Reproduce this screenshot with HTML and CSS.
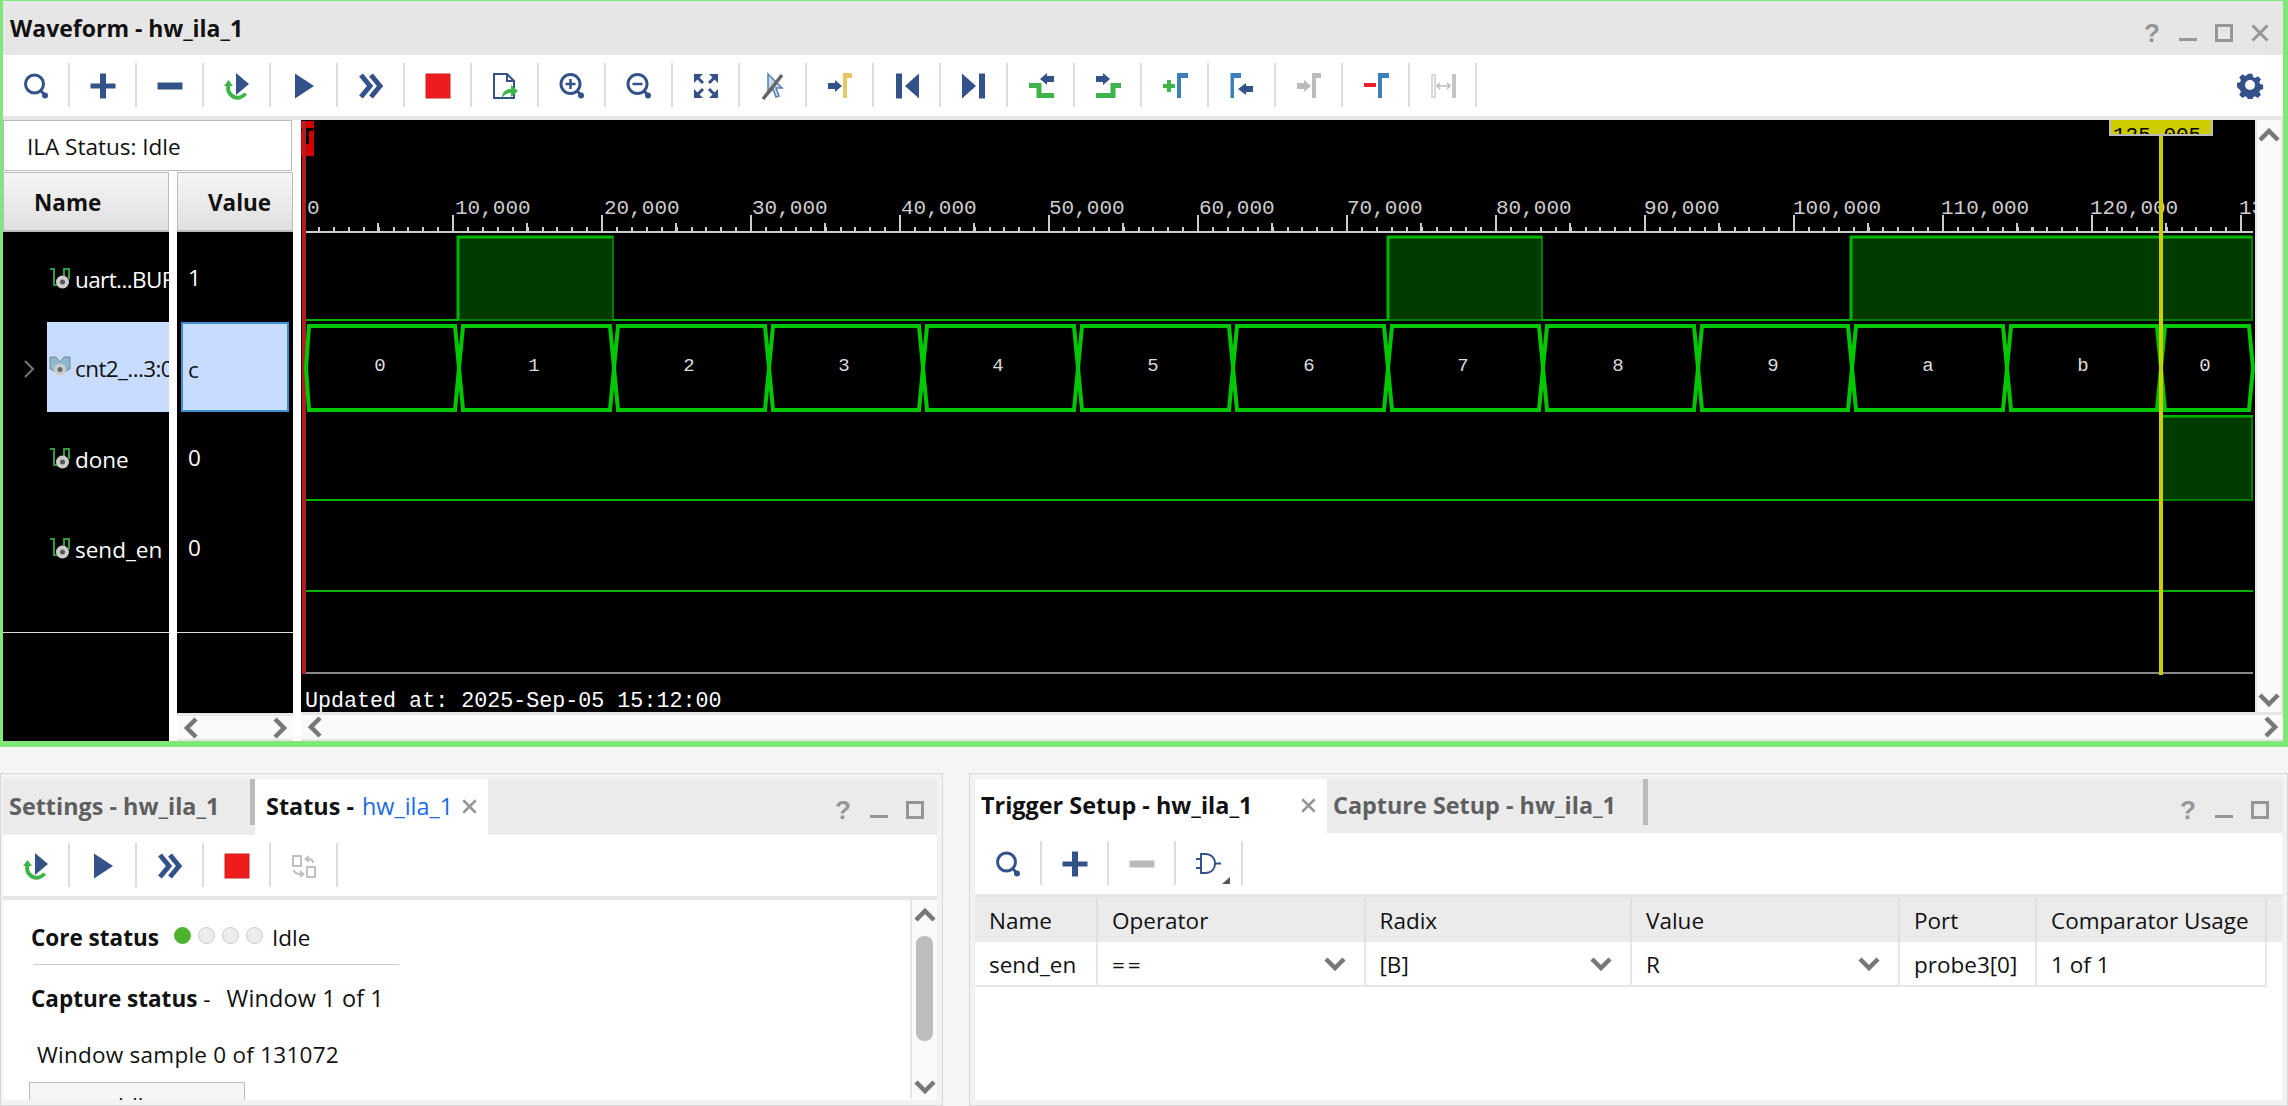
FILE: index.html
```html
<!DOCTYPE html>
<html lang="en">
<head>
  <meta charset="UTF-8">
  <title>Waveform - hw_ila_1</title>
  <link rel="stylesheet" href="styles.css">
</head>
<body>
  <!-- shared icons -->
  <svg class="defs" aria-hidden="true">
    <symbol id="i-search" viewBox="0 0 28 28"><circle cx="12.5" cy="12" r="9" fill="none" stroke="#34528a" stroke-width="3"/><path d="M19 19l4 4" stroke="#34528a" stroke-width="3"/><circle cx="23" cy="23.5" r="3" fill="#34528a"/></symbol>
    <symbol id="i-plus" viewBox="0 0 28 28"><path d="M1.5 11.5h25v5h-25zM11 1.5h6v25h-6z" fill="#34528a"/></symbol>
    <symbol id="i-minus" viewBox="0 0 28 28"><path d="M1.5 10.5h25v7h-25z" fill="currentColor"/></symbol>
    <symbol id="i-refresh" viewBox="0 0 28 28"><path d="M13 1l13 11-13 11z" fill="#34528a"/><path d="M5.5 13.500a9.500 9.500 0 0 0 17 8" fill="none" stroke="#3db54a" stroke-width="4"/><path d="M1 14h9l-4.500-6z" fill="#3db54a"/></symbol>
    <symbol id="i-play" viewBox="0 0 28 28"><path d="M5 1.5L24 14 5 26.5z" fill="#34528a"/></symbol>
    <symbol id="i-ff" viewBox="0 0 28 28"><path d="M4 3l9 11-9 11M14 3l9 11-9 11" fill="none" stroke="#34528a" stroke-width="5"/></symbol>
    <symbol id="i-stop" viewBox="0 0 28 28"><rect x="2" y="2" width="24" height="24" fill="#ee1c1c" stroke="#cc2020"/></symbol>
    <symbol id="i-export" viewBox="0 0 28 28"><path d="M3 2h13l7 7v17H3z" fill="#fff" stroke="#34528a" stroke-width="2"/><path d="M16 2v7h7" fill="none" stroke="#34528a" stroke-width="2"/><path d="M11 26c0-6 4-9 9-9v-4l7 6-7 6v-4c-3 0-6 1-9 5z" fill="#3db54a"/></symbol>
    <symbol id="i-zoomin" viewBox="0 0 28 28"><circle cx="12.5" cy="12" r="9.5" fill="none" stroke="#34528a" stroke-width="3"/><path d="M7.5 12h10M12.5 7v10" stroke="#34528a" stroke-width="2.5"/><path d="M19 19l4 4" stroke="#34528a" stroke-width="3"/><circle cx="23" cy="23.5" r="3" fill="#34528a"/></symbol>
    <symbol id="i-zoomout" viewBox="0 0 28 28"><circle cx="12.5" cy="12" r="9.5" fill="none" stroke="#34528a" stroke-width="3"/><path d="M7.5 12h10" stroke="#34528a" stroke-width="2.5"/><path d="M19 19l4 4" stroke="#34528a" stroke-width="3"/><circle cx="23" cy="23.5" r="3" fill="#34528a"/></symbol>
    <symbol id="i-fit" viewBox="0 0 28 28"><g fill="#34528a"><path d="M2 2h9l-9 9z"/><path d="M26 2h-9l9 9z"/><path d="M2 26h9l-9-9z"/><path d="M26 26h-9l9-9z"/></g><path d="M5 5l6 6M23 5l-6 6M5 23l6-6M23 23l-6-6" stroke="#34528a" stroke-width="3"/></symbol>
    <symbol id="i-cursor" viewBox="0 0 28 28"><path d="M9 2v20l5-5 3 8 3-1-3-8h6z" fill="#c8daf0" stroke="#5a7fb0" stroke-width="1.5"/><path d="M4 27L23 3" stroke="#666" stroke-width="3.5"/></symbol>
    <symbol id="i-mark" viewBox="0 0 28 28"><path d="M2 11h7V8l7 6-7 6v-3H2z" fill="#34528a"/><path d="M17 1h9v5h-5v20h-4z" fill="#e3c863"/></symbol>
    <symbol id="i-first" viewBox="0 0 28 28"><path d="M3 1.500h6v25H3zM26 1.500v25L12 14z" fill="#34528a"/></symbol>
    <symbol id="i-last" viewBox="0 0 28 28"><path d="M19 1.500h6v25h-6zM2 1.500v25L16 14z" fill="#34528a"/></symbol>
    <symbol id="i-prev" viewBox="0 0 28 28"><path d="M27 4h-7V1l-7 6 7 6v-3h7z" fill="#34528a"/><path d="M2 13.500h10v10h15" fill="none" stroke="#3db54a" stroke-width="5"/></symbol>
    <symbol id="i-next" viewBox="0 0 28 28"><path d="M2 4h7V1l7 6-7 6v-3H2z" fill="#34528a"/><path d="M2 23.500h17v-10h8" fill="none" stroke="#3db54a" stroke-width="5"/></symbol>
    <symbol id="i-add" viewBox="0 0 28 28"><path d="M2 12h12v4H2zM6 8h4v12H6z" fill="#3db54a"/><path d="M16 1h11v5h-7v20h-4z" fill="#3b80b8"/></symbol>
    <symbol id="i-goto" viewBox="0 0 28 28"><path d="M2.500 1h10.500v5H6v20H2.500z" fill="#3b80b8"/><path d="M25 14h-7v-3l-8 6 8 6v-3h7z" fill="#34528a"/></symbol>
    <symbol id="i-mark-off" viewBox="0 0 28 28"><path d="M2 11h7V8l7 6-7 6v-3H2z" fill="#bbb"/><path d="M17 1h9v5h-5v20h-4z" fill="#bbb"/></symbol>
    <symbol id="i-remove" viewBox="0 0 28 28"><path d="M2 11h12v4H2z" fill="#ee1c2c"/><path d="M16 1h11v5h-7v20h-4z" fill="#3b80b8"/></symbol>
    <symbol id="i-measure" viewBox="0 0 28 28"><rect x="3" y="3" width="3" height="22" fill="#fff" stroke="#ccc" stroke-width="1.500"/><path d="M23 2h4v24h-4z" fill="#c4c4c4"/><path d="M8 14h13M11 11l-3 3 3 3M18 11l3 3-3 3" fill="none" stroke="#bbb" stroke-width="1.500"/></symbol>
    <symbol id="i-swap" viewBox="0 0 28 28"><g fill="none" stroke="#c0c0c0" stroke-width="2"><rect x="3" y="4" width="8" height="10"/><rect x="17" y="15" width="8" height="10"/><path d="M23 11c0-3-2-4-5-4M4 18c0 3 2 4 7 4"/></g><path d="M19 3l-5 4 5 4zM10 18l5 4-5 4z" fill="#c0c0c0"/></symbol>
    <symbol id="i-gear" viewBox="0 0 28 28"><path d="M11.500 1.500h5l.8 3.500 2.300 1 3-1.900 3.500 3.500-1.900 3 1 2.300 3.300.8v5l-3.300.8-1 2.300 1.900 3-3.500 3.500-3-1.900-2.300 1-.8 3.300h-5l-.8-3.300-2.300-1-3 1.900-3.500-3.500 1.900-3-1-2.300L-.5 16.500v-5l3.300-.8 1-2.300-1.900-3L5.400 1.900l3 1.900 2.300-1z" fill="#34528a" transform="translate(1.500 1.500) scale(.9)"/><circle cx="14" cy="14" r="5" fill="#fff"/></symbol>
    <symbol id="i-sig" viewBox="0 0 22 22"><path d="M1 2h4v16h6M15 10V2h5v10" fill="none" stroke="#2f9a3f" stroke-width="2"/><circle cx="13.500" cy="15" r="6.500" fill="#ccc"/><circle cx="13.500" cy="15" r="2.500" fill="#555"/></symbol>
    <symbol id="i-bus" viewBox="0 0 22 22"><path d="M1 1h6l4 5 4-5h6v12l-6 3H7l-6-3z" fill="#8fb8d0" stroke="#7a8a96"/><circle cx="11" cy="13.500" r="6" fill="#ccc"/><circle cx="11" cy="13.500" r="2.500" fill="#666"/></symbol>
    <symbol id="c-up" viewBox="0 0 22 14"><path d="M2 12l9-9 9 9" fill="none" stroke="#777" stroke-width="4.500"/></symbol>
    <symbol id="c-down" viewBox="0 0 22 14"><path d="M2 2l9 9 9-9" fill="none" stroke="#777" stroke-width="4.500"/></symbol>
    <symbol id="c-left" viewBox="0 0 14 22"><path d="M12 2l-9 9 9 9" fill="none" stroke="#777" stroke-width="4.500"/></symbol>
    <symbol id="c-right" viewBox="0 0 14 22"><path d="M2 2l9 9-9 9" fill="none" stroke="#777" stroke-width="4.500"/></symbol>
    <symbol id="w-min" viewBox="0 0 18 18"><path d="M0 14h18v3H0z" fill="#969696"/></symbol>
    <symbol id="w-max" viewBox="0 0 18 18"><path d="M1.500 1.500h15v15h-15z" fill="none" stroke="#969696" stroke-width="3"/></symbol>
    <symbol id="w-close" viewBox="0 0 18 18"><path d="M1.500 1.500l15 15M16.500 1.500l-15 15" stroke="#969696" stroke-width="3"/></symbol>
  </svg>

  <!-- waveform window -->
  <section class="wave-panel">
    <header class="title-bar">
      <h1 class="title">Waveform - hw_ila_1</h1>
      <div class="win-btns">
        <span class="help">?</span>
        <svg class="win-icon"><use href="#w-min"/></svg>
        <svg class="win-icon"><use href="#w-max"/></svg>
        <svg class="win-icon"><use href="#w-close"/></svg>
      </div>
    </header>
    <div class="toolbar">
      <span class="tb"><svg class="ico"><use href="#i-search"/></svg></span>
      <span class="tb"><svg class="ico"><use href="#i-plus"/></svg></span>
      <span class="tb"><svg class="ico"><use href="#i-minus"/></svg></span>
      <span class="tb"><svg class="ico"><use href="#i-refresh"/></svg></span>
      <span class="tb"><svg class="ico"><use href="#i-play"/></svg></span>
      <span class="tb"><svg class="ico"><use href="#i-ff"/></svg></span>
      <span class="tb"><svg class="ico"><use href="#i-stop"/></svg></span>
      <span class="tb"><svg class="ico"><use href="#i-export"/></svg></span>
      <span class="tb"><svg class="ico"><use href="#i-zoomin"/></svg></span>
      <span class="tb"><svg class="ico"><use href="#i-zoomout"/></svg></span>
      <span class="tb"><svg class="ico"><use href="#i-fit"/></svg></span>
      <span class="tb"><svg class="ico"><use href="#i-cursor"/></svg></span>
      <span class="tb"><svg class="ico"><use href="#i-mark"/></svg></span>
      <span class="tb"><svg class="ico"><use href="#i-first"/></svg></span>
      <span class="tb"><svg class="ico"><use href="#i-last"/></svg></span>
      <span class="tb"><svg class="ico"><use href="#i-prev"/></svg></span>
      <span class="tb"><svg class="ico"><use href="#i-next"/></svg></span>
      <span class="tb"><svg class="ico"><use href="#i-add"/></svg></span>
      <span class="tb"><svg class="ico"><use href="#i-goto"/></svg></span>
      <span class="tb"><svg class="ico"><use href="#i-mark-off"/></svg></span>
      <span class="tb"><svg class="ico"><use href="#i-remove"/></svg></span>
      <span class="tb"><svg class="ico"><use href="#i-measure"/></svg></span>
      <svg class="ico gear"><use href="#i-gear"/></svg>
    </div>

    <div class="wave-body">
      <div class="signals">
        <div class="ila-status">ILA Status: Idle</div>
        <div class="cols">
          <div class="col col-name">
            <div class="col-head">Name</div>
            <div class="rows">
              <div class="row"><svg class="sig"><use href="#i-sig"/></svg><span class="sig-text tight">uart...BUF</span></div>
              <div class="row row-sel">
                <svg class="expand" viewBox="0 0 12 18"><path d="M2 1l8 8-8 8" fill="none" stroke="#777" stroke-width="2"/></svg>
                <div class="sel-fill"><svg class="sig"><use href="#i-bus"/></svg><span class="sig-text tight">cnt2_...3:0</span></div>
              </div>
              <div class="row"><svg class="sig"><use href="#i-sig"/></svg><span class="sig-text">done</span></div>
              <div class="row"><svg class="sig"><use href="#i-sig"/></svg><span class="sig-text">send_en</span></div>
            </div>
          </div>
          <div class="col col-value">
            <div class="col-head">Value</div>
            <div class="rows">
              <div class="val">1</div>
              <div class="val val-sel">c</div>
              <div class="val">0</div>
              <div class="val">0</div>
            </div>
            <div class="val-rest"></div>
            <div class="hscroll val-scroll">
              <svg class="ch-h"><use href="#c-left"/></svg>
              <svg class="ch-h"><use href="#c-right"/></svg>
            </div>
          </div>
        </div>
      </div>

      <div class="wave-main">
        <div class="canvas-row">
          <svg class="wave" viewBox="301 120 1954 592" font-family="'Liberation Mono', monospace">
            <!-- time marker -->
            <svg x="301" y="121" width="13" height="35" viewBox="301 121 13 35">
              <rect x="301" y="121" width="13" height="35" fill="#d40000"/>
              <text x="300" y="144" font-size="23" font-weight="bold" fill="#000">T</text>
            </svg>
            <rect x="302" y="156" width="2" height="518" fill="#e01010"/>
            <rect x="302" y="121" width="1" height="35" fill="#e01010"/>
            <rect x="303" y="121" width="3" height="553" fill="#a82222"/>

            <!-- ruler -->
            <g fill="#ccc" font-size="21">
              <text x="307" y="214">0</text>
              <text x="455" y="214">10,000</text>
              <text x="604" y="214">20,000</text>
              <text x="752" y="214">30,000</text>
              <text x="901" y="214">40,000</text>
              <text x="1049" y="214">50,000</text>
              <text x="1199" y="214">60,000</text>
              <text x="1347" y="214">70,000</text>
              <text x="1496" y="214">80,000</text>
              <text x="1644" y="214">90,000</text>
              <text x="1793" y="214">100,000</text>
              <text x="1941" y="214">110,000</text>
              <text x="2090" y="214">120,000</text>
              <text x="2239" y="214">130,000</text>
            </g>
            <g stroke="#ccc" shape-rendering="crispEdges">
              <path d="M306 232H2253" stroke-width="2"/>
              <path d="M318 229H2253" stroke-width="5" stroke-dasharray="2 12.900"/>
              <path d="M377 227H2253" stroke-width="8" stroke-dasharray="2 147"/>
              <path d="M452 223H2253" stroke-width="16" stroke-dasharray="2 147"/>
            </g>

            <!-- uart high pulses -->
            <g fill="#003c00" stroke="#007c00" stroke-width="2">
              <rect x="458" y="237" width="155" height="83"/>
              <rect x="1388" y="237" width="154" height="83"/>
              <rect x="1851" y="237" width="401" height="83"/>
              <rect x="2162" y="417" width="90" height="83"/>
            </g>
            <g fill="none" stroke="#00b400" stroke-width="3">
              <path d="M458 320V237H613"/>
              <path d="M1388 320V237H1542"/>
              <path d="M1851 320V237H2252"/>
            </g>
            <g fill="none" stroke="#00b400" stroke-width="2">
              <path d="M306 320H458M613 320H1388M1542 320H1851"/>
              <path d="M306 500H2161M2161 416H2253"/>
              <path d="M306 591H2253"/>
            </g>

            <!-- cnt2 bus -->
            <g fill="none" stroke="#00c800" stroke-width="4">
              <path d="M306 368L309 326H455L463 410H610L618 326H765L773 410H919L927 326H1074L1082 410H1229L1237 326H1384L1392 410H1539L1547 326H1694L1702 410H1848L1856 326H2003L2011 410H2157L2165 326H2249L2253 368"/>
              <path d="M306 368L309 410H455L463 326H610L618 410H765L773 326H919L927 410H1074L1082 326H1229L1237 410H1384L1392 326H1539L1547 410H1694L1702 326H1848L1856 410H2003L2011 326H2157L2165 410H2249L2253 368"/>
            </g>
            <g fill="#ddd" font-size="19" text-anchor="middle">
              <text x="380" y="371">0</text>
              <text x="534" y="371">1</text>
              <text x="689" y="371">2</text>
              <text x="844" y="371">3</text>
              <text x="998" y="371">4</text>
              <text x="1153" y="371">5</text>
              <text x="1309" y="371">6</text>
              <text x="1463" y="371">7</text>
              <text x="1618" y="371">8</text>
              <text x="1773" y="371">9</text>
              <text x="1928" y="371">a</text>
              <text x="2083" y="371">b</text>
              <text x="2205" y="371">0</text>
            </g>

            <path d="M306 673H2253" stroke="#8a8a8a" stroke-width="2"/>
            <text x="305" y="707" fill="#fff" font-size="21.700">Updated at: 2025-Sep-05 15:12:00</text>

            <!-- cursor -->
            <rect x="2159" y="136" width="4" height="539" fill="#cccc00"/>
            <svg x="2109" y="120" width="104" height="16" viewBox="2109 120 104 16">
              <rect x="2109" y="120" width="104" height="16" fill="#bbb"/>
              <rect x="2111" y="120" width="100" height="14" fill="#cccc00"/>
              <svg x="2109" y="120" width="102" height="14" viewBox="2109 120 102 14">
                <text x="2113" y="141" font-size="21" fill="#000">125,005</text>
              </svg>
            </svg>
          </svg>
          <div class="vscroll wave-vs">
            <svg class="ch-v"><use href="#c-up"/></svg>
            <svg class="ch-v"><use href="#c-down"/></svg>
          </div>
        </div>
        <div class="hscroll wave-hs">
          <svg class="ch-h"><use href="#c-left"/></svg>
          <svg class="ch-h"><use href="#c-right"/></svg>
        </div>
      </div>
    </div>
  </section>

  <div class="bottom">
    <!-- status panel -->
    <section class="panel panel-left">
      <div class="tabbar tabbar-left">
        <span class="tab tab-off">Settings - hw_ila_1</span>
        <span class="tab-sep"></span>
        <span class="tab tab-on tab-status"><b>Status -</b> <span class="blue">hw_ila_1</span>
          <svg class="tab-x"><use href="#w-close"/></svg></span>
        <div class="win-btns win-small">
          <span class="help">?</span>
          <svg class="win-icon"><use href="#w-min"/></svg>
          <svg class="win-icon"><use href="#w-max"/></svg>
        </div>
      </div>
      <div class="toolbar">
        <span class="tb"><svg class="ico"><use href="#i-refresh"/></svg></span>
        <span class="tb"><svg class="ico"><use href="#i-play"/></svg></span>
        <span class="tb"><svg class="ico"><use href="#i-ff"/></svg></span>
        <span class="tb"><svg class="ico"><use href="#i-stop"/></svg></span>
        <span class="tb"><svg class="ico"><use href="#i-swap"/></svg></span>
      </div>
      <div class="status-wrap">
        <div class="status-body">
          <div class="line">
            <b>Core status</b>
            <span class="dots"><i class="dot dot-on"></i><i class="dot"></i><i class="dot"></i><i class="dot"></i></span>
            <span>Idle</span>
          </div>
          <hr class="rule">
          <div class="line line-cap"><b>Capture status</b><span class="dash">-</span><span class="win-text">Window 1 of 1</span></div>
          <div class="line line-sample">Window sample 0 of 131072</div>
          <button class="idle-btn">Idle</button>
        </div>
        <div class="vscroll status-vs">
          <svg class="ch-v"><use href="#c-up"/></svg>
          <span class="thumb"></span>
          <svg class="ch-v"><use href="#c-down"/></svg>
        </div>
      </div>
    </section>

    <!-- trigger panel -->
    <section class="panel panel-right">
      <div class="tabbar tabbar-right">
        <span class="tab tab-on tab-trigger"><b>Trigger Setup - hw_ila_1</b>
          <svg class="tab-x"><use href="#w-close"/></svg></span>
        <span class="tab tab-off tab-capture">Capture Setup - hw_ila_1</span>
        <span class="tab-sep"></span>
        <div class="win-btns win-small">
          <span class="help">?</span>
          <svg class="win-icon"><use href="#w-min"/></svg>
          <svg class="win-icon"><use href="#w-max"/></svg>
        </div>
      </div>
      <div class="toolbar">
        <span class="tb"><svg class="ico"><use href="#i-search"/></svg></span>
        <span class="tb"><svg class="ico"><use href="#i-plus"/></svg></span>
        <span class="tb off"><svg class="ico"><use href="#i-minus"/></svg></span>
        <span class="tb">
          <svg class="gate" viewBox="0 0 44 44">
            <path d="M14 13h4c8 0 10 6 10 9.500 0 4-2 9.500-10 9.500h-4z" fill="none" stroke="#34528a" stroke-width="2"/>
            <path d="M9 18h5M9 27h5M28 22.500h6" stroke="#34528a" stroke-width="2"/>
            <path d="M43 36v7h-8z" fill="#555"/>
          </svg>
        </span>
      </div>
      <div class="table-wrap">
        <table class="probes">
          <colgroup>
            <col class="w-name"><col class="w-op"><col class="w-radix"><col class="w-val"><col class="w-port"><col class="w-cmp"><col>
          </colgroup>
          <thead>
            <tr><th>Name</th><th>Operator</th><th>Radix</th><th>Value</th><th>Port</th><th>Comparator Usage</th><th class="fill"></th></tr>
          </thead>
          <tbody>
            <tr>
              <td>send_en</td>
              <td><div class="combo"><span class="eq">==</span><svg class="ch-combo"><use href="#c-down"/></svg></div></td>
              <td><div class="combo"><span>[B]</span><svg class="ch-combo"><use href="#c-down"/></svg></div></td>
              <td><div class="combo"><span>R</span><svg class="ch-combo"><use href="#c-down"/></svg></div></td>
              <td>probe3[0]</td>
              <td>1 of 1</td>
              <td class="fill"></td>
            </tr>
          </tbody>
        </table>
      </div>
    </section>
  </div>
</body>
</html>
```

FILE: styles.css
```css
* { box-sizing: border-box; }
html, body { margin: 0; height: 100%; }
body { width: 2288px; height: 1106px; overflow: hidden; background: #f5f5f5; color: #111; font-family: "Open Sans", "Noto Sans", sans-serif; font-size: 22.500px; }
.defs { display: none; }

/* waveform window */
.wave-panel { height: 747px; border-style: solid; border-color: #80e878; border-width: 1px 5px 6px 3px; background: #fff; }
.title-bar { height: 54px; background: #e6e6e6; display: flex; align-items: center; justify-content: space-between; }
.title { margin: 0 0 0 7px; font-size: 23px; font-weight: 700; }
.win-btns { display: flex; align-items: center; gap: 18px; margin-right: 14px; margin-top: 10px; }
.help { width: 18px; font: bold 26px "Liberation Sans", sans-serif; color: #969696; text-align: center; line-height: 18px; }
.win-icon { width: 18px; height: 18px; }

.toolbar { height: 65px; padding-top: 8px; background: #fff; border-bottom: 4px solid #e6e6e6; display: flex; align-items: flex-start; }
.tb { width: 67px; height: 44px; border-right: 2px solid #ddd; display: flex; align-items: center; justify-content: center; flex: none; color: #34528a; }
.tb.off { color: #bbb; }
.ico { width: 28px; height: 28px; margin-top: 2px; }
.gate { width: 44px; height: 44px; flex: none; }
.gear { margin-left: auto; margin-right: 19px; margin-top: 8px; }

.wave-body { display: flex; height: 621px; }
.signals { width: 290px; flex: none; }
.ila-status { height: 51px; width: 289px; border: 1px solid #bbb; background: #fff; padding-left: 23px; line-height: 51px; }
.cols { display: flex; gap: 8px; margin-top: 1px; height: 569px; }
.col { display: flex; flex-direction: column; background: #000; color: #fff; }
.col-name { width: 166px; }
.col-value { width: 116px; background: #fff; }
.col-head { height: 60px; flex: none; background: linear-gradient(#f5f5f5, #e0e0e0); border: 1px solid #bbb; border-bottom-width: 2px; color: #111; font-weight: 700; line-height: 60px; padding-left: 30px; }
.rows { height: 401px; background: #000; border-bottom: 1px solid #ddd; flex: none; }
.val-rest { height: 80px; background: #000; flex: none; }
.row { height: 90px; display: flex; align-items: center; padding: 4px 0 0 46px; overflow: hidden; position: relative; white-space: nowrap; }
.sig { width: 22px; height: 22px; flex: none; margin-right: 4px; margin-top: -3px; }
.sig-text { font-size: 22.500px; min-width: 0; overflow: hidden; }
.tight { letter-spacing: -0.6px; }
.row-sel { padding: 0 0 0 44px; }
.sel-fill { height: 90px; flex: 1; min-width: 0; overflow: hidden; background: #c8dcff; color: #111; display: flex; align-items: center; padding: 3px 0 0 2px; }
.expand { position: absolute; left: 20px; top: 38px; width: 12px; height: 18px; }
.val { height: 90px; padding: 3px 0 0 11px; line-height: 86px; }
.val-sel { margin: 0 4px; padding-left: 5px; background: #c8dcff; color: #111; border: 2px solid #3f8fd0; }

.hscroll { background: #fafafa; border-style: solid; border-color: #e6e6e6; border-width: 3px 0 2px; display: flex; align-items: center; justify-content: space-between; }
.ch-h { width: 14px; height: 22px; flex: none; }
.ch-v { width: 22px; height: 14px; flex: none; }
.val-scroll { flex: none; height: 28px; padding: 0 6px 0 7px; }

.wave-main { flex: 1; min-width: 0; padding-left: 8px; display: flex; flex-direction: column; }
.canvas-row { display: flex; height: 592px; flex: none; }
.wave { width: 1954px; height: 592px; flex: none; background: #000; display: block; }
.vscroll { background: #fafafa; border-style: solid; border-color: #e6e6e6; border-width: 0 2px; display: flex; flex-direction: column; align-items: center; justify-content: space-between; }
.wave-vs { width: 28px; height: 592px; padding: 8px 0 5px; }
.wave-hs { height: 29px; padding: 0 5px 0 7px; }

/* bottom panels */
.bottom { display: flex; gap: 26px; padding-top: 26px; height: 359px; }
.panel { height: 333px; background: #f2f2f2; border: 1px solid #d8d8d8; padding: 5px 5px 5px 2px; display: flex; flex-direction: column; }
.panel-left { width: 943px; }
.panel-right { width: 1319px; padding-left: 5px; }
.tabbar { background: #ebebeb; display: flex; align-items: flex-start; flex: none; }
.tabbar-left { height: 56px; }
.tabbar-right { height: 54px; }
.tabbar .win-btns { margin-left: auto; margin-top: 22px; }
.win-small { margin-right: 13px; gap: 18px; }
.tab { height: 100%; display: flex; align-items: center; font-size: 23.400px; white-space: nowrap; flex: none; padding-bottom: 2px; }
.tab-off { color: #5f5f5f; font-weight: 700; padding-left: 6px; width: 247px; }
.tab-sep { width: 5px; height: 46px; background: #bbb; flex: none; }
.tab-on { background: #fff; }
.tab-status { width: 233px; padding-left: 11px; gap: 8px; }
.tab-status .tab-x { margin-left: auto; margin-right: 11px; }
.blue { color: #1a6ae6; }
.tab-x { width: 15px; height: 15px; flex: none; }
.tab-trigger { width: 352px; padding-left: 6px; }
.tab-trigger .tab-x { margin-left: auto; margin-right: 11px; }
.tab-capture { width: 316px; padding-left: 6px; }

.status-wrap { flex: 1; min-height: 0; display: flex; background: #fff; }
.status-body { flex: 1; min-width: 0; overflow: hidden; padding: 20px 0 0 28px; }
.line { height: 34px; display: flex; align-items: center; white-space: nowrap; }
.dots { display: flex; gap: 7px; margin: -3px 9px 0 15px; }
.dot { width: 17px; height: 17px; border-radius: 50%; background: #ececec; border: 1px solid #ccc; }
.dot-on { background: #4db32d; border-color: #4db32d; }
.rule { width: 365px; margin: 10px 0 0 3px; border: 0; border-top: 1px solid #ccc; }
.line-cap { margin-top: 16px; }
.dash { margin: 0 16px 0 6px; }
.win-text { font-size: 23.500px; letter-spacing: 0.1px; }
.line-sample { margin: 22px 0 0 6px; letter-spacing: 0.25px; }
.idle-btn { display: block; width: 216px; height: 46px; margin: 11px 0 0 -2px; padding: 0; background: #f5f5f5; border: 1px solid #bbb; font: inherit; color: #111; }
.status-vs { width: 27px; height: 199px; flex: none; border-width: 0 0 0 2px; padding: 8px 0 5px; }
.thumb { width: 17px; height: 105px; border-radius: 8px; background: #bdbdbd; margin-top: 4px; margin-bottom: 30px; }

.table-wrap { flex: 1; min-height: 0; background: #fff; }
.probes { width: 100%; table-layout: fixed; border-collapse: collapse; font-size: 22.500px; }
.w-name { width: 122px; }
.w-op { width: 267.500px; }
.w-radix { width: 266.500px; }
.w-val { width: 268px; }
.w-port { width: 137px; }
.w-cmp { width: 229.500px; }
.probes th { height: 44px; padding: 0 0 0 14px; background: #ebebeb; font-weight: 400; text-align: left; border-right: 2px solid #e0e0e0; white-space: nowrap; }
.probes td { height: 44px; padding: 1px 0 0 14px; border-right: 2px solid #e6e6e6; border-bottom: 2px solid #e6e6e6; white-space: nowrap; }
.probes .fill { border: 0; }
.combo { display: flex; align-items: center; justify-content: space-between; padding-right: 18px; }
.ch-combo { width: 22px; height: 14px; }
.eq { letter-spacing: 3px; }
```
